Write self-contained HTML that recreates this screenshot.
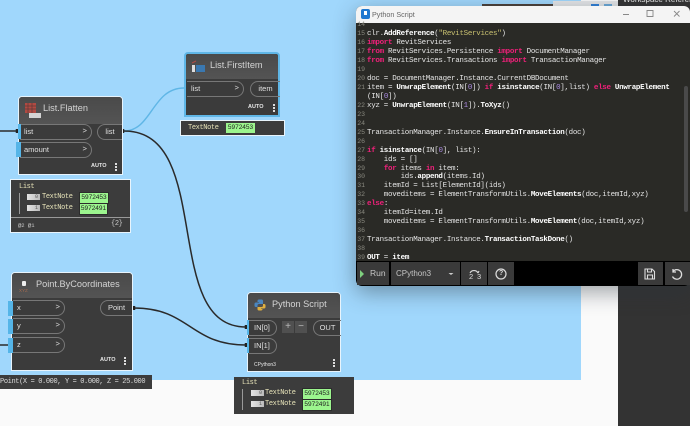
<!DOCTYPE html>
<html><head><meta charset="utf-8">
<style>
html,body{margin:0;padding:0;width:690px;height:426px;overflow:hidden;background:#fafafa;font-family:"Liberation Sans",sans-serif}
.a{position:absolute}
#root{position:absolute;left:0;top:0;width:690px;height:426px;overflow:hidden;filter:blur(.3px)}
.node{position:absolute;background:#3b3b3b;border:1px solid #e8f4fc;border-radius:4px 4px 0 0;box-sizing:border-box}
.hd{position:absolute;left:0;top:0;right:0;background:linear-gradient(#4a4a4a,#545454);border-radius:3px 3px 0 0}
.ttl{position:absolute;color:#d4d4d4;font-size:9.2px;white-space:nowrap}
.pin{position:absolute;box-sizing:border-box;border:1px solid #777;border-left:none;border-radius:0 8px 8px 0;height:16px;color:#e0e0e0;font-size:7.5px;line-height:14px;padding-left:4px}
.pin b{position:absolute;right:4px;top:0;font-weight:normal;font-family:"Liberation Mono",monospace}
.pout{position:absolute;box-sizing:border-box;border:1px solid #777;border-right:none;border-radius:8px 0 0 8px;height:16px;color:#e0e0e0;font-size:7.5px;line-height:14px;text-align:center}
.tab{position:absolute;width:4px;height:15px;background:#55b5e8}
.auto{position:absolute;color:#e8e8e8;font-size:5.5px;font-weight:bold;white-space:nowrap}
.dots{position:absolute;width:2px;height:2px;background:#ddd;box-shadow:0 3px 0 #ddd,0 6px 0 #ddd}
.pv{position:absolute;background:#3c3c3c;border:1px solid #e8f4fc;box-sizing:border-box}
.m{position:absolute;font-family:"Liberation Mono",monospace;font-size:7px;letter-spacing:-.38px;white-space:nowrap;color:#e6e2b8;line-height:9px}
.g{position:absolute;background:#9cf58e;color:#222;font-size:6.5px;line-height:9px;height:10px;text-align:center;font-family:"Liberation Sans",sans-serif;border:1px solid #2c2c2c;box-sizing:content-box}
.ix{position:absolute;width:11px;height:6px;background:linear-gradient(90deg,#e4e4e4,#bbb);color:#555;font-family:"Liberation Mono",monospace;font-size:5px;line-height:6px;text-align:right;padding-right:2px}
#code{position:absolute;left:367px;top:21px;font-family:"Liberation Mono",monospace;font-size:7.5px;letter-spacing:-.3px;line-height:8.97px;color:#e4e4e4;white-space:pre}
#nums{position:absolute;left:356px;top:21px;width:9px;font-family:"Liberation Mono",monospace;font-size:6.5px;line-height:8.97px;color:#8a8a80;white-space:pre;text-align:right}
.k{color:#f0207a;font-weight:bold}
.f{color:#fff;font-weight:bold}
.s{color:#c8c070}
.n{color:#a98ae0}
.btn{position:absolute;top:262px;height:23px;background:#3a3a3a}
</style></head><body>
<div id="root">
<div class="a" style="left:0;top:0;width:581px;height:380px;background:#a0d7fc"></div>
<div class="a" style="left:581px;top:0;width:37px;height:426px;background:#fafafa"></div>
<div class="a" style="left:618px;top:0;width:72px;height:426px;background:#333"></div>
<div class="a" style="left:482px;top:4px;width:74px;height:3px;background:#4a3f38"></div>
<div class="a" style="left:553px;top:1px;width:65px;height:6px;background:#e4e6e8"></div>
<div class="a" style="left:591px;top:4px;width:8px;height:3px;background:#2f80d8"></div>
<div class="a" style="left:604px;top:4px;width:8px;height:3px;background:#6aa8d8"></div>
<div class="a" style="left:623px;top:-6px;color:#eee;font-size:8px;white-space:nowrap;line-height:11px">Workspace Reference</div>

<svg class="a" style="left:0;top:0" width="360" height="426" fill="none">
<path d="M124 131 C152 131 152 88 184 88" stroke="#5fb6e6" stroke-width="1.4"/>
<path d="M124 131 C215 131 160 327 246 327" stroke="#2a2a2a" stroke-width="1.5"/>
<path d="M134 308 C190 308 190 345 246 345" stroke="#2a2a2a" stroke-width="1.5"/>
<path d="M0 131H16M0 345H9" stroke="#2a2a2a" stroke-width="1.5"/>
<path d="M246 325v4M246 343v4M123 129v4M134 306v4M17 129v4" stroke="#222" stroke-width="2.5"/>
</svg>

<!-- List.Flatten -->
<div class="node" style="left:18px;top:96px;width:105px;height:79px">
 <div class="hd" style="height:27px"></div>
 <svg class="a" style="left:5px;top:5px" width="18" height="18"><rect x="1" y="1" width="11" height="10" fill="#b04a42"/><path d="M1 4h11M1 7h11M4 1v10M8 1v10" stroke="#5a3a38" stroke-width=".7"/><rect x="5" y="11" width="12" height="5" fill="#d4d4d4"/></svg>
 <div class="ttl" style="left:24px;top:6px">List.Flatten</div>
 <div class="pin" style="left:1px;top:27px;width:72px">list<b>&gt;</b></div>
 <div class="pin" style="left:1px;top:45px;width:72px">amount<b>&gt;</b></div>
 <div class="pout" style="left:78px;top:27px;width:25px">list</div>
 <div class="auto" style="left:72px;top:66px">AUTO</div>
 <div class="dots" style="left:96px;top:66px"></div>
</div>
<div class="tab" style="left:18px;top:124px;width:3px"></div>
<div class="tab" style="left:16px;top:142px;width:5px"></div>
<div class="pv" style="left:10px;top:179px;width:121px;height:54px">
 <div class="m" style="left:8px;top:3px">List</div>
 <div class="a" style="left:8px;top:13px;width:1px;height:21px;background:#999"></div>
 <div class="ix" style="left:16px;top:14px">0</div><div class="m" style="left:31px;top:13px">TextNote</div><div class="g" style="left:68px;top:12px;width:28px">5972453</div>
 <div class="ix" style="left:16px;top:25px">1</div><div class="m" style="left:31px;top:24px">TextNote</div><div class="g" style="left:68px;top:23px;width:27px">5972491</div>
 <div class="a" style="left:0;top:37px;width:119px;height:1px;background:#999"></div>
 <div class="m" style="left:7px;top:41px;font-size:5.5px;letter-spacing:0;color:#ccc">@2 @1</div>
 <div class="m" style="left:100px;top:40px;color:#ccc">{2}</div>
</div>

<!-- List.FirstItem -->
<div class="node" style="left:184px;top:52px;width:96px;height:65px;border:2px solid #5fb6e6">
 <div class="hd" style="height:25px"></div>
 <svg class="a" style="left:5px;top:5px" width="16" height="16"><rect x="1" y="6" width="3" height="7" fill="#ddd"/><rect x="5" y="6" width="9" height="7" fill="#3a78b0"/><path d="M1 4l4-2" stroke="#b04a42"/></svg>
 <div class="ttl" style="left:24px;top:6px">List.FirstItem</div>
 <div class="pin" style="left:1px;top:27px;width:57px">list<b>&gt;</b></div>
 <div class="pout" style="left:64px;top:27px;width:30px">item</div>
 <div class="auto" style="left:62px;top:50px">AUTO</div>
 <div class="dots" style="left:87px;top:50px"></div>
</div>
<div class="pv" style="left:180px;top:120px;width:105px;height:16px">
 <div class="m" style="left:7px;top:3px">TextNote</div><div class="g" style="left:45px;top:2px;width:29px;border:none">5972453</div>
</div>

<!-- Point.ByCoordinates -->
<div class="node" style="left:11px;top:272px;width:122px;height:99px">
 <div class="hd" style="height:25px"></div>
 <div class="a" style="left:10px;top:8px;width:4px;height:5px;background:#eee;border-radius:1px"></div>
 <div class="a" style="left:7px;top:15px;font-size:4.5px;color:#a06a50">XYZ</div>
 <div class="ttl" style="left:24px;top:6px">Point.ByCoordinates</div>
 <div class="pin" style="left:1px;top:27px;width:52px">x<b>&gt;</b></div>
 <div class="pin" style="left:1px;top:45px;width:52px">y<b>&gt;</b></div>
 <div class="pin" style="left:1px;top:64px;width:52px">z<b>&gt;</b></div>
 <div class="pout" style="left:88px;top:27px;width:32px">Point</div>
 <div class="auto" style="left:88px;top:84px">AUTO</div>
 <div class="dots" style="left:112px;top:84px"></div>
</div>
<div class="tab" style="left:8px;top:301px;width:5px"></div>
<div class="tab" style="left:8px;top:319px;width:5px"></div>
<div class="tab" style="left:8px;top:338px;width:5px"></div>
<div class="pv" style="left:-2px;top:375px;width:154px;height:14px;border:none">
 <div class="m" style="left:2px;top:3px;color:#ddd">Point(X = 0.000, Y = 0.000, Z = 25.000</div>
</div>

<!-- Python Script -->
<div class="node" style="left:247px;top:292px;width:94px;height:80px">
 <div class="hd" style="height:25px"></div>
 <svg class="a" style="left:6px;top:6px" width="12" height="12"><path d="M5 0.5h2.5a1.5 1.5 0 0 1 1.5 1.5v3h-4a1.5 1.5 0 0 0-1.5 1.5V8H2a1.500 1.500 0 0 1-1.500-1.500V5a1.500 1.500 0 0 1 1.500-1.500h3V3H3.500V2A1.500 1.500 0 0 1 5 .5z" fill="#4a86c0"/><path d="M7 11.500H5a1.500 1.500 0 0 1-1.500-1.500V8h4a1.500 1.500 0 0 0 1.500-1.500V5h1a1.500 1.500 0 0 1 1.500 1.500V8A1.500 1.500 0 0 1 10 9.500H7v.5h1.500v.5A1.500 1.500 0 0 1 7 11.500z" fill="#e0b040"/></svg>
 <div class="ttl" style="left:24px;top:6px">Python Script</div>
 <div class="pin" style="left:1px;top:27px;width:28px;padding-left:5px">IN[0]</div>
 <div class="pin" style="left:1px;top:45px;width:28px;padding-left:5px">IN[1]</div>
 <div class="a" style="left:34px;top:28px;width:12px;height:12px;background:#505050;color:#bbb;font-size:10px;line-height:11px;text-align:center">+</div>
 <div class="a" style="left:47px;top:28px;width:12px;height:12px;background:#505050;color:#bbb;font-size:10px;line-height:11px;text-align:center">−</div>
 <div class="pout" style="left:65px;top:27px;width:28px">OUT</div>
 <div class="auto" style="left:6px;top:69px;font-weight:normal;font-size:5px">CPython3</div>
 <div class="dots" style="left:85px;top:66px"></div>
</div>
<div class="tab" style="left:247px;top:320px;width:2px"></div>
<div class="tab" style="left:247px;top:338px;width:2px"></div>
<div class="pv" style="left:234px;top:377px;width:120px;height:37px;border:none">
 <div class="m" style="left:8px;top:2px">List</div>
 <div class="a" style="left:8px;top:12px;width:1px;height:21px;background:#999"></div>
 <div class="ix" style="left:17px;top:13px">0</div><div class="m" style="left:31px;top:12px">TextNote</div><div class="g" style="left:68px;top:11px;width:28px">5972453</div>
 <div class="ix" style="left:17px;top:24px">1</div><div class="m" style="left:31px;top:23px">TextNote</div><div class="g" style="left:68px;top:22px;width:28px">5972491</div>
</div>

<!-- Window -->
<div class="a" style="left:356px;top:6px;width:334px;height:280px;background:#000;border-radius:6px 6px 6px 6px;box-shadow:0 6px 22px rgba(40,50,60,.45);overflow:hidden">
 <div class="a" style="left:0;top:0;width:334px;height:17px;background:#f4f4f4"></div>
 <div class="a" style="left:0;top:17px;width:334px;height:238px;background:#2a2a26"></div>
</div>
<div class="a" style="left:361px;top:9px;width:9px;height:10px;background:#1f78d0;border-radius:2px"></div>
<div class="a" style="left:364px;top:11px;width:3px;height:4px;background:#fff"></div>
<div class="a" style="left:372px;top:9px;font-size:7.2px;line-height:11px;color:#666">Python Script</div>
<svg class="a" style="left:620px;top:8px" width="70" height="12" fill="none" stroke="#888" stroke-width=".9"><path d="M3 6.500h6M27 2.500h6v6h-6zM54 3l5.500 5.500M59.500 3L54 8.500"/></svg>
<div id="nums">14
15
16
17
18
19
20
21

22
23
24
25
26
27
28
29
30
31
32
33
34
35
36
37
38
39</div>
<div id="code">
<span>clr.</span><span class="f">AddReference</span>(<span class="s">"RevitServices"</span>)
<span class="k">import</span> RevitServices
<span class="k">from</span> RevitServices.Persistence <span class="k">import</span> DocumentManager
<span class="k">from</span> RevitServices.Transactions <span class="k">import</span> TransactionManager

doc = DocumentManager.Instance.CurrentDBDocument
item = <span class="f">UnwrapElement</span>(IN[<span class="n">0</span>]) <span class="k">if</span> <span class="f">isinstance</span>(IN[<span class="n">0</span>],list) <span class="k">else</span> <span class="f">UnwrapElement</span>
(IN[<span class="n">0</span>])
xyz = <span class="f">UnwrapElement</span>(IN[<span class="n">1</span>]).<span class="f">ToXyz</span>()


TransactionManager.Instance.<span class="f">EnsureInTransaction</span>(doc)

<span class="k">if</span> <span class="f">isinstance</span>(IN[<span class="n">0</span>], list):
    ids = []
    <span class="k">for</span> items <span class="k">in</span> item:
        ids.<span class="f">append</span>(items.Id)
    itemId = List[ElementId](ids)
    moveditems = ElementTransformUtils.<span class="f">MoveElements</span>(doc,itemId,xyz)
<span class="k">else</span>:
    itemId=item.Id
    moveditems = ElementTransformUtils.<span class="f">MoveElement</span>(doc,itemId,xyz)

TransactionManager.Instance.<span class="f">TransactionTaskDone</span>()

<span class="f">OUT</span> = <span class="f">item</span></div>
<div class="a" style="left:684px;top:86px;width:4px;height:126px;background:#4a4a4a;border-radius:2px"></div>
<!-- toolbar -->
<div class="btn" style="left:357px;width:32px"></div>
<div class="btn" style="left:391px;width:69px"></div>
<div class="btn" style="left:461px;width:26px"></div>
<div class="btn" style="left:488px;width:26px"></div>
<div class="btn" style="left:638px;width:25px"></div>
<div class="btn" style="left:665px;width:25px"></div>
<svg class="a" style="left:356px;top:261px" width="334" height="25" fill="none">
<path d="M4 9l4 4-4 4z" fill="#7fd07f"/>
<path d="M92.500 12h5l-2.500 2z" fill="#ccc"/>
<path d="M114 12a4.500 4.500 0 0 1 8 0M122 12l1-2" stroke="#ddd" stroke-width="1.100"/>
<circle cx="145" cy="13" r="5" stroke="#ddd" stroke-width="1.200"/>
<path d="M289 8h7l2.500 2.500V18H289zM291.500 8v3h4V8M291.500 18v-4h5v4" stroke="#ddd" stroke-width="1.100"/>
<path d="M317 10.500a4.800 4.800 0 1 1-.5 5M317 8v3h3" stroke="#ddd" stroke-width="1.300"/>
</svg>
<div class="a" style="left:370px;top:268px;color:#c8c8c8;font-size:8.500px;line-height:11px">Run</div>
<div class="a" style="left:396px;top:268px;color:#c4c4c4;font-size:8px;line-height:11px">CPython3</div>
<div class="a" style="left:469px;top:273px;color:#ddd;font-size:7.500px;line-height:8px">2</div>
<div class="a" style="left:477px;top:273px;color:#ddd;font-size:7.500px;line-height:8px">3</div>
<div class="a" style="left:499px;top:270px;color:#ddd;font-size:7px;line-height:8px;font-weight:bold">?</div>
</div>
</body></html>
